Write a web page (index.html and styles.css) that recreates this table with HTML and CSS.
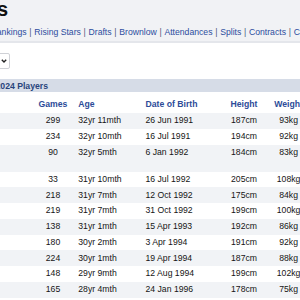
FILE: index.html
```html
<!DOCTYPE html>
<html lang="en">
<head>
    <meta charset="UTF-8">
    <meta name="viewport" content="width=device-width, initial-scale=1.0">
    <title>Players</title>
    <link rel="stylesheet" href="styles.css">
</head>
<body>
    <!-- page header -->
    <div class="top">
        <h1 class="title">Players</h1>
        <nav class="nav">
            <a href="#">Rankings</a><span class="sep">|</span>
            <a href="#">Rising Stars</a><span class="sep">|</span>
            <a href="#">Drafts</a><span class="sep">|</span>
            <a href="#">Brownlow</a><span class="sep">|</span>
            <a href="#">Attendances</a><span class="sep">|</span>
            <a href="#">Splits</a><span class="sep">|</span>
            <a href="#">Contracts</a><span class="sep">|</span>
            <a href="#">Coaches</a>
        </nav>
    </div>

    <!-- season filter -->
    <div class="filters">
        <div class="select">
            <span>2024</span>
            <svg width="6" height="4" viewBox="0 0 6 4"><polyline points="0.8,0.8 3,3 5.2,0.8" fill="none" stroke="#222" stroke-width="1.4"/></svg>
        </div>
    </div>

    <div class="section-head">2024 Players</div>

    <table class="players">
        <colgroup>
            <col class="c-name">
            <col class="c-games">
            <col class="c-age">
            <col class="c-dob">
            <col class="c-height">
            <col class="c-weight">
        </colgroup>
        <thead>
            <tr>
                <th class="name">Player</th>
                <th class="games">Games</th>
                <th class="age">Age</th>
                <th class="dob">Date of Birth</th>
                <th class="height">Height</th>
                <th class="weight">Weight</th>
            </tr>
        </thead>
        <tbody>
            <tr><td class="name">T. Mitchell</td><td class="games">299</td><td class="age">32yr 11mth</td><td class="dob">26 Jun 1991</td><td class="height">187cm</td><td class="weight">93kg</td></tr>
            <tr><td class="name">J. Kelly</td><td class="games">234</td><td class="age">32yr 10mth</td><td class="dob">16 Jul 1991</td><td class="height">194cm</td><td class="weight">92kg</td></tr>
            <tr><td class="name">L. Ryan<span class="note">(delisted)</span></td><td class="games">90</td><td class="age">32yr 5mth</td><td class="dob">6 Jan 1992</td><td class="height">184cm</td><td class="weight">83kg</td></tr>
            <tr><td class="name">S. Draper</td><td class="games">33</td><td class="age">31yr 10mth</td><td class="dob">16 Jul 1992</td><td class="height">205cm</td><td class="weight">108kg</td></tr>
            <tr><td class="name">C. Guthrie</td><td class="games">218</td><td class="age">31yr 7mth</td><td class="dob">12 Oct 1992</td><td class="height">175cm</td><td class="weight">84kg</td></tr>
            <tr><td class="name">B. Grundy</td><td class="games">219</td><td class="age">31yr 7mth</td><td class="dob">31 Oct 1992</td><td class="height">199cm</td><td class="weight">100kg</td></tr>
            <tr><td class="name">M. Hurley</td><td class="games">138</td><td class="age">31yr 1mth</td><td class="dob">15 Apr 1993</td><td class="height">192cm</td><td class="weight">86kg</td></tr>
            <tr><td class="name">D. Parish</td><td class="games">180</td><td class="age">30yr 2mth</td><td class="dob">3 Apr 1994</td><td class="height">191cm</td><td class="weight">92kg</td></tr>
            <tr><td class="name">R. Gray</td><td class="games">224</td><td class="age">30yr 1mth</td><td class="dob">19 Apr 1994</td><td class="height">187cm</td><td class="weight">88kg</td></tr>
            <tr><td class="name">J. Cameron</td><td class="games">148</td><td class="age">29yr 9mth</td><td class="dob">12 Aug 1994</td><td class="height">199cm</td><td class="weight">102kg</td></tr>
            <tr><td class="name">K. Allen</td><td class="games">165</td><td class="age">28yr 4mth</td><td class="dob">24 Jan 1996</td><td class="height">178cm</td><td class="weight">75kg</td></tr>
            <tr><td class="name">A. Smith</td><td class="games">102</td><td class="age">28yr 1mth</td><td class="dob">2 Apr 1996</td><td class="height">188cm</td><td class="weight">85kg</td></tr>
        </tbody>
    </table>
</body>
</html>
```

FILE: styles.css
```css
body {
    font-family: "Liberation Sans", Arial, sans-serif;
    font-size: 8.67px;
    color: #151515;
    background-color: #fff;
    margin: 0;
    overflow: hidden;
}
.top {
    background-color: #f1f2f5;
    border-bottom: 2px solid #e4e6eb;
    padding-bottom: 3px;
}
.title {
    margin: 0 0 0 -63px;
    font-size: 20px;
    line-height: 18px;
    font-weight: bold;
    color: #111;
}
.nav {
    display: flex;
    gap: 2.7px;
    margin: 9px 0 0 -9.5px;
    line-height: 11px;
    white-space: nowrap;
}
.nav a {
    color: #2c4d9e;
    text-decoration: none;
}
.nav .sep {
    color: #4b5878;
}
.filters {
    padding: 10.3px 0 9.7px;
}
.select {
    display: flex;
    justify-content: space-between;
    align-items: center;
    box-sizing: border-box;
    width: 60px;
    height: 16px;
    margin-left: -50px;
    padding: 0 2px 0 6px;
    border: 1px solid #cfd1d6;
    border-radius: 2px;
    background-color: #fff;
}
.section-head {
    background-color: #d6dce7;
    color: #28447c;
    font-weight: bold;
    line-height: 12px;
    padding-top: 1px;
    text-indent: -4.5px;
    white-space: nowrap;
}
.players {
    border-collapse: collapse;
    table-layout: fixed;
    width: 393.2px;
    margin-left: -84px;
}
.c-name { width: 120px; }
.c-games { width: 34px; }
.c-age { width: 70px; }
.c-dob { width: 80px; }
.c-height { width: 48px; }
.c-weight { width: 41.2px; }
.players th, .players td {
    padding: 2.23px 0;
    line-height: 11.33px;
    vertical-align: top;
    white-space: nowrap;
    text-align: left;
}
.players th {
    padding: 7.3px 0 2.37px;
    color: #2c4b98;
    font-weight: bold;
}
.players tbody tr:nth-child(odd) {
    background-color: #f1f3f6;
}
.players .name {
    padding-left: 4px;
}
.players .note {
    display: block;
}
.players .games, .players .height, .players .weight {
    text-align: center;
}
.players .age {
    padding-left: 8.3px;
}
.players .dob {
    padding-left: 5.5px;
}
```
